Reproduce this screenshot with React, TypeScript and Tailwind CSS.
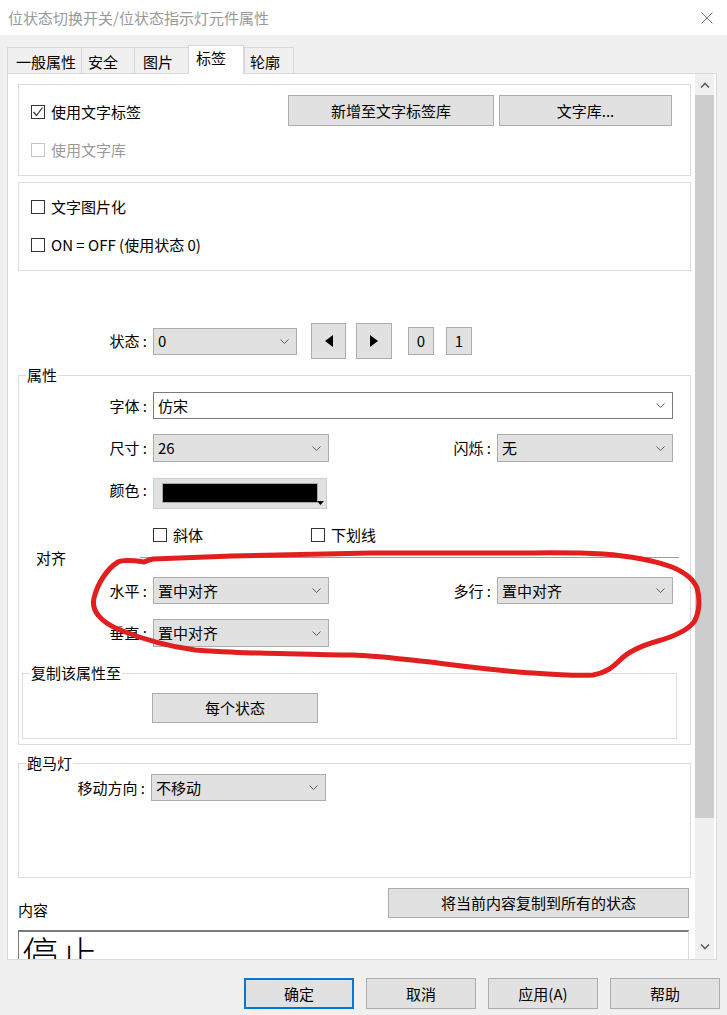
import React from 'react';
import clsx from 'clsx';

const Chevron = ({ up, down }: { up?: boolean; down?: boolean }) => {
  if (up) {
    return (
      <svg width="10" height="6" viewBox="0 0 10 6">
        <path d="M1 5.5 L5 1.5 L9 5.5" fill="none" stroke="#606060" strokeWidth="1.6" />
      </svg>
    );
  }
  if (down) {
    return (
      <svg width="10" height="6" viewBox="0 0 10 6">
        <path d="M1 0.5 L5 4.5 L9 0.5" fill="none" stroke="#606060" strokeWidth="1.6" />
      </svg>
    );
  }
  return (
    <svg width="9" height="5" viewBox="0 0 9 5" className="shrink-0">
      <path d="M0.5 0.5 L4.5 4.5 L8.5 0.5" fill="none" stroke="#5a5a5a" strokeWidth="1" />
    </svg>
  );
};

function Combo({ value, w, white }: { value: string; w: string; white?: boolean }) {
  return (
    <div
      className={clsx(
        'flex items-center h-[27px] border pl-[4px] pr-[7px] shrink-0',
        w,
        white ? 'bg-white border-[#7a7a7a]' : 'bg-[#e1e1e1] border-[#adadad]'
      )}
    >
      <span className="flex-1">{value}</span>
      <Chevron />
    </div>
  );
}

function Btn({ className, children }: { className?: string; children?: React.ReactNode }) {
  return (
    <div className={clsx('flex items-center justify-center border border-[#adadad] bg-[#e1e1e1] shrink-0', className)}>
      {children}
    </div>
  );
}

function Check({ label, checked, disabled }: { label: string; checked?: boolean; disabled?: boolean }) {
  return (
    <div className="flex items-center">
      <div
        className={clsx(
          'w-[14px] h-[14px] border bg-white flex items-center justify-center',
          disabled ? 'border-[#c4c4c4]' : 'border-[#333333]'
        )}
      >
        {checked && (
          <svg width="12" height="12" viewBox="0 0 12 12">
            <path d="M1.5 6 L4.5 9.5 L10.5 1.5" fill="none" stroke="#333" strokeWidth="1.2" />
          </svg>
        )}
      </div>
      <span className={clsx('ml-[6px]', disabled && 'text-[#9a9a9a]')}>{label}</span>
    </div>
  );
}

const Label = ({ w, children }: { w: string; children: React.ReactNode }) => (
  <div className={clsx('text-right pr-[6px] shrink-0', w)}>{children}</div>
);

export default function App() {
  const tabs = [
    { name: '一般属性', cls: 'w-[74px] pl-[8px]' },
    { name: '安全', cls: 'w-[53px] pl-[6px]' },
    { name: '图片', cls: 'w-[54px] pl-[8px]' },
    { name: '标签', cls: 'w-[56px] pl-[7px]', active: true },
    { name: '轮廓', cls: 'w-[50px] pl-[5px] border-r' },
  ];

  return (
    <div className="relative w-[727px] h-[1015px] overflow-hidden bg-[#f0f0f0] text-[15px] leading-[20px] text-black font-['Noto_Sans_CJK_SC',sans-serif]">
      {/* title bar */}
      <div className="h-[35px] bg-white flex items-center pl-[8px] pr-[14px]">
        <span className="flex-1 text-[#999999]">位状态切换开关/位状态指示灯元件属性</span>
        <svg width="12" height="12" viewBox="0 0 12 12">
          <path d="M0.5 0.5 L11.5 11.5 M11.5 0.5 L0.5 11.5" stroke="#808080" strokeWidth="1" />
        </svg>
      </div>

      {/* tabs */}
      <div className="flex items-end pt-[10px] pl-[7px] h-[38px]">
        {tabs.map((t) =>
          t.active ? (
            <div
              key={t.name}
              className={clsx('relative z-10 h-[29px] -mb-px bg-white border-t border-l border-r border-[#d9d9d9] pt-[2px]', t.cls)}
            >
              {t.name}
            </div>
          ) : (
            <div key={t.name} className={clsx('h-[26px] border-t border-l border-[#d9d9d9] pt-[4px]', t.cls)}>
              {t.name}
            </div>
          )
        )}
      </div>

      {/* panel */}
      <div className="ml-[7px] w-[710px] h-[887px] border border-[#d9d9d9] bg-white flex">
        <div className="flex-1 overflow-hidden pl-[10px]">
          {/* box 1 */}
          <div className="mt-[10px] w-[673px] h-[92px] border border-[#dcdcdc]">
            <div className="flex items-center h-[31px] mt-[10px] pl-[12px] pr-[18px]">
              <div className="pt-[3px]">
                <Check checked label="使用文字标签" />
              </div>
              <div className="ml-auto flex gap-[5px]">
                <Btn className="w-[206px] h-[31px]">新增至文字标签库</Btn>
                <Btn className="w-[173px] h-[31px]">文字库...</Btn>
              </div>
            </div>
            <div className="mt-[14px] pl-[12px] h-[20px] flex items-center">
              <Check disabled label="使用文字库" />
            </div>
          </div>

          {/* box 2 */}
          <div className="mt-[6px] w-[673px] h-[89px] border border-[#dcdcdc]">
            <div className="mt-[14px] pl-[12px] h-[20px] flex items-center">
              <Check label="文字图片化" />
            </div>
            <div className="mt-[18px] pl-[12px] h-[20px] flex items-center">
              <Check label="ON = OFF (使用状态 0)" />
            </div>
          </div>

          {/* state row */}
          <div className="mt-[52px] h-[36px] flex items-center">
            <Label w="w-[135px]">状态 :</Label>
            <Combo value="0" w="w-[144px]" />
            <Btn className="ml-[14px] w-[35px] h-[36px]">
              <svg width="8" height="12" viewBox="0 0 8 12">
                <path d="M8 0 L0 6 L8 12 Z" fill="#000" />
              </svg>
            </Btn>
            <Btn className="ml-[10px] w-[36px] h-[36px]">
              <svg width="8" height="12" viewBox="0 0 8 12">
                <path d="M0 0 L8 6 L0 12 Z" fill="#000" />
              </svg>
            </Btn>
            <Btn className="ml-[16px] w-[26px] h-[28px]">0</Btn>
            <Btn className="ml-[12px] w-[26px] h-[28px]">1</Btn>
          </div>

          {/* 属性 */}
          <fieldset className="mt-[6px] w-[673px] border border-[#dcdcdc] pb-[5px]">
            <legend className="ml-[7px] px-[1px] leading-[20px]">属性</legend>

            <div className="mt-[7px] h-[27px] flex items-center">
              <Label w="w-[134px]">字体 :</Label>
              <Combo value="仿宋" w="w-[520px]" white />
            </div>

            <div className="mt-[15px] h-[28px] flex items-center pr-[17px]">
              <Label w="w-[134px]">尺寸 :</Label>
              <Combo value="26" w="w-[176px] h-[28px]" />
              <div className="flex-1" />
              <Label w="">闪烁 :</Label>
              <Combo value="无" w="w-[176px] h-[28px]" />
            </div>

            <div className="mt-[16px] h-[31px] flex items-start">
              <Label w="w-[134px] pt-[2px]">颜色 :</Label>
              <div className="relative w-[174px] h-[31px] border border-[#cccccc] bg-[#e1e1e1] pt-[4px] pl-[8px]">
                <div className="w-[156px] h-[20px] bg-black border border-[#a8a8a8]" />
                <svg className="absolute right-[2px] bottom-[3px]" width="7" height="4" viewBox="0 0 7 4">
                  <path d="M0 0 L7 0 L3.5 4 Z" fill="#000" />
                </svg>
              </div>
            </div>

            <div className="mt-[16px] h-[20px] flex items-center pl-[134px]">
              <div className="w-[158px]">
                <Check label="斜体" />
              </div>
              <Check label="下划线" />
            </div>

            <div className="mt-[3px] h-[20px] flex items-center pl-[17px] pr-[11px]">
              <span className="w-[104px] shrink-0">对齐</span>
              <div className="flex-1 h-[2px] border-t border-[#9a9a9a] bg-white" />
            </div>

            <div className="mt-[9px] h-[27px] flex items-center pr-[17px]">
              <Label w="w-[134px]">水平 :</Label>
              <Combo value="置中对齐" w="w-[176px]" />
              <div className="flex-1" />
              <Label w="">多行 :</Label>
              <Combo value="置中对齐" w="w-[176px]" />
            </div>

            <div className="mt-[15px] h-[28px] flex items-center">
              <Label w="w-[134px]">垂直 :</Label>
              <Combo value="置中对齐" w="w-[176px] h-[28px]" />
            </div>

            <fieldset className="mt-[16px] ml-[3px] w-[655px] border border-[#dcdcdc] pb-[15px]">
              <legend className="ml-[7px] px-[1px] leading-[20px]">复制该属性至</legend>
              <Btn className="mt-[10px] ml-[129px] w-[166px] h-[30px]">每个状态</Btn>
            </fieldset>
          </fieldset>

          {/* 跑马灯 */}
          <fieldset className="mt-[8px] w-[673px] border border-[#dcdcdc] pb-[76px]">
            <legend className="ml-[7px] px-[1px] leading-[20px]">跑马灯</legend>
            <div className="mt-[1px] h-[27px] flex items-center">
              <Label w="w-[132px]">移动方向 :</Label>
              <Combo value="不移动" w="w-[175px]" />
            </div>
          </fieldset>

          {/* 内容 */}
          <div className="mt-[10px] w-[673px] flex items-start">
            <span className="mt-[12px]">内容</span>
            <Btn className="ml-auto mr-[2px] w-[301px] h-[30px]">将当前内容复制到所有的状态</Btn>
          </div>
          <div className="mt-[10px] w-[671px] h-[80px] border border-[#7a7a7a] border-t-2 border-r-[#dcdcdc] pt-[2px] pl-[3px] text-[36px] leading-[36px] tracking-[3px] font-light">
            停止
          </div>
        </div>

        {/* scrollbar */}
        <div className="w-[19px] mr-[2px] bg-[#f0f0f0] flex flex-col">
          <div className="h-[21px] flex items-center justify-center">
            <Chevron up />
          </div>
          <div className="h-[723px] bg-[#cdcdcd]" />
          <div className="flex-1" />
          <div className="h-[24px] flex items-center justify-center">
            <Chevron down />
          </div>
        </div>
      </div>

      {/* bottom buttons */}
      <div className="mt-[18px] flex justify-end gap-[12px] pr-[7px]">
        <div className="w-[110px] h-[31px] flex items-center justify-center border-2 border-[#0078d7] bg-[#e1e1e1]">确定</div>
        <Btn className="w-[110px] h-[31px]">取消</Btn>
        <Btn className="w-[110px] h-[31px]">应用(A)</Btn>
        <Btn className="w-[110px] h-[31px]">帮助</Btn>
      </div>

      {/* hand-drawn red annotation */}
      <svg className="absolute inset-0 pointer-events-none" width="727" height="1015" viewBox="0 0 727 1015">
        <path
          d="M144 562 C130 560 122 560 118 562 C108 568 98 582 94 598 C91 610 100 622 120 630 C140 638 165 646 195 650 C225 652 240 653 260 653 C300 654 330 655 352 655 C380 656 400 659 430 662 C470 667 500 671 533 673 C560 675 580 676 593 675 C605 673 612 668 620 660 C628 652 640 646 658 641 C672 637 686 632 694 622 C700 612 700 598 697 588 C693 578 684 572 672 567 C655 561 630 556 603 554 C570 552 540 553 510 553 C460 553 420 553 371 553 C320 554 270 555 232 556 C200 557 175 558 153 559 C148 560 146 561 144 562"
          fill="none"
          stroke="#e21f1f"
          strokeWidth="5"
          strokeLinecap="round"
          strokeLinejoin="round"
        />
      </svg>
    </div>
  );
}
